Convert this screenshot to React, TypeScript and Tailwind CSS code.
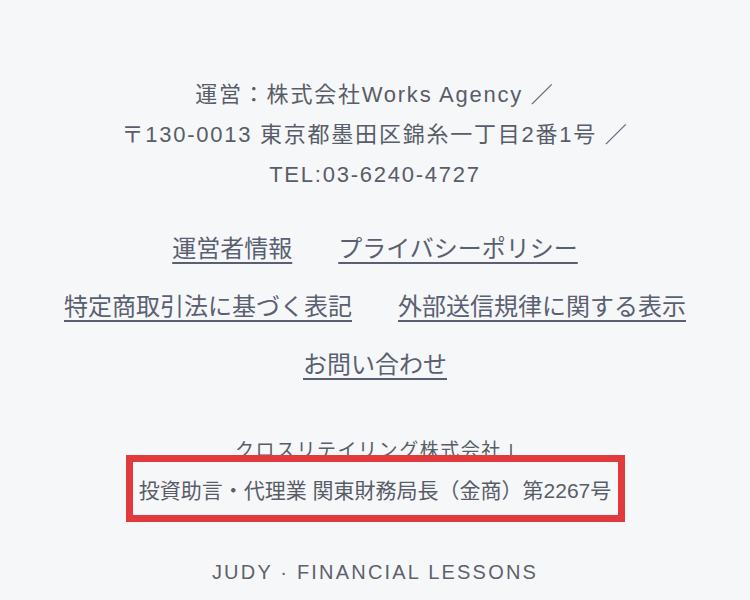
const FONT = "font-['Liberation_Sans','Noto_Sans_CJK_JP',sans-serif]"

const linkRows: string[][] = [
  ['運営者情報', 'プライバシーポリシー'],
  ['特定商取引法に基づく表記', '外部送信規律に関する表示'],
  ['お問い合わせ'],
]

export default function App() {
  return (
    <div className={`${FONT} min-h-[600px] w-full bg-[#f6f7f9] text-[#585d67] flex flex-col items-center`}>
      {/* Operator info */}
      <div className="pt-[75px] text-center text-[22px] leading-[40px] tracking-[0.08em]">
        <p>運営：株式会社Works Agency ／</p>
        <p>〒130-0013 東京都墨田区錦糸一丁目2番1号 ／</p>
        <p>TEL:03-6240-4727</p>
      </div>

      {/* Footer links */}
      <nav className="mt-[25px] flex flex-col items-center">
        {linkRows.map((row, i) => (
          <div key={i} className="flex gap-[46px] text-[24px] leading-[58px]">
            {row.map((label) => (
              <a
                key={label}
                href="#"
                className="text-[#5a6070] underline decoration-[1.5px] underline-offset-[5px]"
              >
                {label}
              </a>
            ))}
          </div>
        ))}
      </nav>

      {/* Company registration */}
      <div className="mt-[37px] flex flex-col items-center text-center">
        <p className="text-[19px] leading-[40px] tracking-[0.08em]">クロスリテイリング株式会社 |</p>
        <div className="relative">
          <p className="text-[21px] leading-[40px]">投資助言・代理業 関東財務局長（金商）第2267号</p>
          <div className="absolute left-[-13px] right-[-14px] top-[-16px] bottom-[-11px] border-[7px] border-[#e03a3c]" />
        </div>
      </div>

      <p className="mt-[47px] text-[20px] leading-[28px] tracking-[0.11em] text-[#5d626c]">
        JUDY · FINANCIAL LESSONS
      </p>
    </div>
  )
}
